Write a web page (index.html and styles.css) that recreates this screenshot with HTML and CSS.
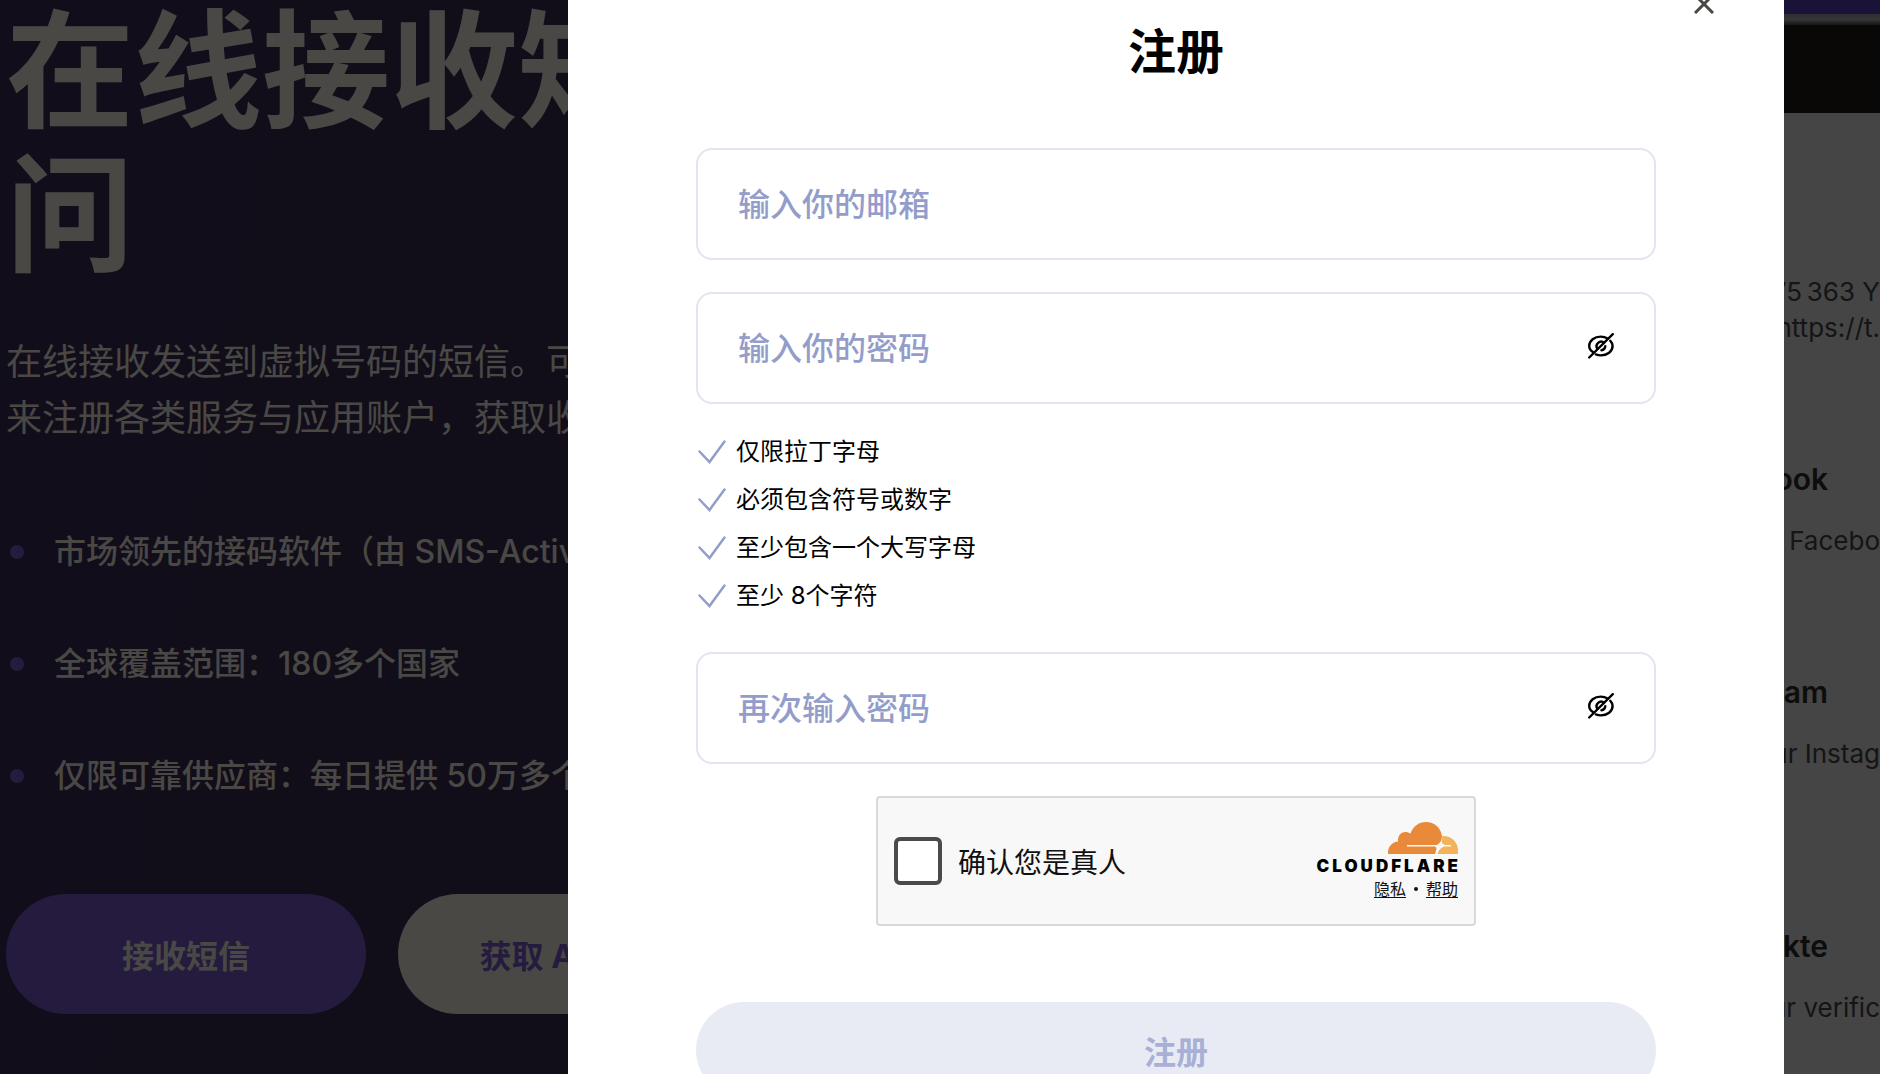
FILE: index.html
```html
<!DOCTYPE html>
<html lang="zh-CN">
<head>
  <meta charset="utf-8">
  <meta name="viewport" content="width=device-width, initial-scale=1">
  <title>注册</title>
  <link rel="stylesheet" href="styles.css">
</head>
<body>
  <svg class="sprite" aria-hidden="true">
    <symbol id="check" viewBox="0 0 32 32"><path d="M3.500 15.500 13.500 26 28.500 5.500" fill="none" stroke="currentColor" stroke-width="2.500" stroke-linecap="round"/></symbol>
    <symbol id="eye-off" viewBox="0 0 26 26">
      <g fill="none" stroke="currentColor" stroke-width="2.400" stroke-linecap="round">
        <path d="M1.200 24.500 24.800 1.200"/>
        <path d="M5.200 19.200C2.600 17.700 1.200 15.400 1.200 13 1.200 7.600 6.500 3.600 12.800 3.600c2.600 0 4.900.7 6.900 1.900"/>
        <path d="M22.300 7.800c1.500 1.500 2.300 3.300 2.300 5.200 0 5.400-5.300 9.400-11.800 9.400-1.800 0-3.500-.4-5-1"/>
        <path d="M9.400 15.800A4.500 4.500 0 0 1 16.100 9.900"/>
        <path d="M17.300 13.200a4.300 4.300 0 0 1-3.900 4"/>
      </g>
    </symbol>
  </svg>

  <main class="page">
    <section class="hero">
      <h1 class="hero-title">在线接收短信<br>问</h1>
      <p class="hero-text">在线接收发送到虚拟号码的短信。可用<br>来注册各类服务与应用账户，获取收码</p>
      <ul class="features">
        <li>市场领先的接码软件（由 SMS-Activate</li>
        <li>全球覆盖范围：180多个国家</li>
        <li>仅限可靠供应商：每日提供 50万多个</li>
      </ul>
      <div class="hero-actions">
        <button type="button" class="pill pill-primary">接收短信</button>
        <button type="button" class="pill pill-light">获取 API 密钥</button>
      </div>
    </section>
    <aside class="phone">
      <div class="phone-edge"></div>
      <div class="phone-bezel"></div>
      <div class="messages">
        <p class="message-text">75&thinsp;363 Y<br>https://t.</p>
        <article class="message">
          <h2>Facebook</h2>
          <p class="message-text">Facebo</p>
        </article>
        <article class="message">
          <h2>Instagram</h2>
          <p class="message-text">Your Instag</p>
        </article>
        <article class="message message-late">
          <h2>VKontakte</h2>
          <p class="message-text">Your verific</p>
        </article>
      </div>
    </aside>
  </main>

  <div class="overlay">
    <section class="modal" role="dialog" aria-modal="true" aria-labelledby="modal-title">
      <button type="button" class="close" aria-label="关闭">
        <svg viewBox="0 0 20 20" width="20" height="20"><path d="M1 1 19 19M19 1 1 19" stroke="currentColor" stroke-width="3"/></svg>
      </button>
      <h2 class="modal-title" id="modal-title">注册</h2>
      <form class="form">
        <div class="field">
          <input type="email" aria-label="邮箱" placeholder="输入你的邮箱">
        </div>
        <div class="field">
          <input type="password" aria-label="密码" placeholder="输入你的密码">
          <button type="button" class="toggle" aria-label="显示密码"><svg width="26" height="26"><use href="#eye-off"/></svg></button>
        </div>
        <ul class="rules">
          <li><svg width="32" height="32"><use href="#check"/></svg>仅限拉丁字母</li>
          <li><svg width="32" height="32"><use href="#check"/></svg>必须包含符号或数字</li>
          <li><svg width="32" height="32"><use href="#check"/></svg>至少包含一个大写字母</li>
          <li><svg width="32" height="32"><use href="#check"/></svg>至少 8个字符</li>
        </ul>
        <div class="field">
          <input type="password" aria-label="再次输入密码" placeholder="再次输入密码">
          <button type="button" class="toggle" aria-label="显示密码"><svg width="26" height="26"><use href="#eye-off"/></svg></button>
        </div>
        <div class="captcha">
          <label class="captcha-label"><input type="checkbox">确认您是真人</label>
          <div class="brand">
            <svg class="brand-cloud" viewBox="0 0 70 32" width="70" height="32" aria-hidden="true">
              <path fill="#e98a3b" d="M0 32C-.5 25 4 20 10 19.500 9.500 14 13 10 17.500 10c2 0 3.500.6 5 1.600C25 4.500 30.500 0 38 0c8.500 0 15 6 16 14 0 4-1.500 7-5 9H19v1.500h27.500c1.500 0 2.200 1.500 1.800 3L47 32z"/>
              <path fill="#f3b35b" d="M54.500 14C63 13.500 70 20 70 28v4H49.500c1-4 3.500-6.500 7-7.500H63V23h-5.500c-2.500-.5-4-2-3.800-4z"/>
            </svg>
            <span class="brand-name">CLOUDFLARE</span>
            <div class="brand-links"><a href="#privacy">隐私</a><span class="dot"></span><a href="#help">帮助</a></div>
          </div>
        </div>
        <button type="submit" class="submit">注册</button>
      </form>
    </section>
  </div>
</body>
</html>
```

FILE: styles.css
```css
* {
  box-sizing: border-box;
}

body,
h1,
h2,
p,
ul {
  margin: 0;
  padding: 0;
}

body {
  font-family: Inter, "Noto Sans CJK SC", sans-serif;
  background: #392b57;
  overflow: hidden;
}

ul {
  list-style: none;
}

button,
input {
  font: inherit;
}

button {
  border: 0;
  background: none;
  padding: 0;
  cursor: pointer;
}

.sprite {
  display: none;
}

/* Page behind the dialog */
.page {
  display: grid;
  grid-template-columns: minmax(0, 1fr) 220px;
  min-height: 100vh;
  overflow: hidden;
  background: linear-gradient(100deg, #3a2c58, #392c54 45%, #3e3060);
}

.hero {
  padding-left: 6px;
  color: #f7f0e6;
  white-space: nowrap;
}

.hero-title {
  font-size: 128px;
  line-height: 144px;
  font-weight: 700;
}

.hero-text {
  margin-top: 46px;
  font-size: 36px;
  line-height: 56px;
}

.features {
  display: grid;
  gap: 64px;
  margin-top: 82px;
  font-size: 32px;
  line-height: 48px;
  font-weight: 500;
}

.features li {
  display: flex;
  align-items: center;
  gap: 30px;
  padding-left: 4px;
}

.features li::before {
  content: "";
  width: 14px;
  height: 14px;
  border-radius: 50%;
  background: #7b5dcf;
}

.hero-actions {
  display: flex;
  gap: 32px;
  margin-top: 94px;
}

.pill {
  width: 360px;
  height: 120px;
  border-radius: 60px;
  font-size: 32px;
  font-weight: 700;
}

.pill-primary {
  background: #7b5dcf;
  color: #f7f0e6;
}

.pill-light {
  background: #f7f0e6;
  color: #7b5dcf;
}

.phone {
  padding-top: 14px;
  background: #5a3fc1;
}

.phone-edge {
  height: 11px;
  background: linear-gradient(#9c9cac, #b4b4bc 50%, #4a4a4a);
}

.phone-bezel {
  height: 88px;
  background: #1e1c14;
}

.messages {
  padding-top: 161px;
  min-height: 961px;
  background: #e6e6e6;
  color: #484848;
  text-align: right;
}

.messages h2 {
  padding-right: 52px;
  font-size: 30px;
  line-height: 40px;
  font-weight: 600;
  color: #2c2c2c;
}

.message {
  margin-top: 113px;
}

.message-text {
  font-size: 26px;
  line-height: 36px;
}

.message h2 + .message-text {
  margin-top: 24px;
}

.message + .message-late {
  margin-top: 154px;
}

/* Dialog */
.overlay {
  position: fixed;
  inset: 0;
  overflow: hidden;
  background: rgba(0, 0, 0, 0.7);
}

.modal {
  position: relative;
  width: calc(100% - 96px);
  max-width: 1216px;
  min-height: 100%;
  margin: 0 96px 0 auto;
  padding: 24px 128px 64px;
  background: #fff;
}

.close {
  position: absolute;
  top: -6px;
  right: 70px;
  display: flex;
  color: #4a4844;
}

.modal-title {
  margin-bottom: 68px;
  font-size: 48px;
  line-height: 56px;
  font-weight: 700;
  text-align: center;
  color: #000;
}

.form {
  display: flex;
  flex-direction: column;
}

.field {
  display: flex;
  align-items: center;
  height: 112px;
  padding: 0 40px;
  border: 2px solid #e2e5f1;
  border-radius: 16px;
}

.field + .field,
.captcha {
  margin-top: 32px;
}

.field input {
  flex: 1;
  min-width: 0;
  height: 48px;
  padding: 0;
  border: 0;
  outline: 0;
  background: none;
  font-size: 32px;
  font-weight: 500;
}

.field input::placeholder {
  color: #939dca;
  opacity: 1;
}

.toggle {
  display: flex;
  padding-bottom: 4px;
  color: #000;
}

.rules {
  margin: 24px 0 32px;
  font-size: 24px;
  line-height: 48px;
  color: #000;
}

.rules li {
  display: flex;
  align-items: center;
  gap: 8px;
}

.rules svg {
  color: #939dca;
}

.captcha {
  display: flex;
  align-items: center;
  justify-content: space-between;
  align-self: center;
  width: 600px;
  max-width: 100%;
  height: 130px;
  padding: 0 16px;
  border: 2px solid #d9d9d9;
  border-radius: 4px;
  background: #f8f8f8;
  color: #111;
}

.captcha-label {
  display: flex;
  align-items: center;
  gap: 16px;
  font-size: 28px;
}

.captcha-label input {
  appearance: none;
  width: 48px;
  height: 48px;
  margin: 0;
  border: 4px solid #4a4a4a;
  border-radius: 6px;
  background: #fff;
}

.brand {
  display: flex;
  flex-direction: column;
  align-items: flex-end;
  gap: 2px;
}

.brand-name {
  margin-right: -3px;
  font-size: 17px;
  line-height: 20px;
  font-weight: 900;
  letter-spacing: 3px;
  color: #000;
}

.brand-links {
  display: flex;
  align-items: center;
  gap: 8px;
  font-size: 16px;
  line-height: 22px;
}

.brand-links a {
  color: #111;
  text-underline-offset: 2px;
}

.dot {
  width: 4px;
  height: 4px;
  border-radius: 50%;
  background: #111;
}

.submit {
  height: 96px;
  margin-top: 76px;
  border-radius: 48px;
  background: #e8ebf4;
  color: #a9b0d5;
  font-size: 32px;
  font-weight: 700;
}
```
